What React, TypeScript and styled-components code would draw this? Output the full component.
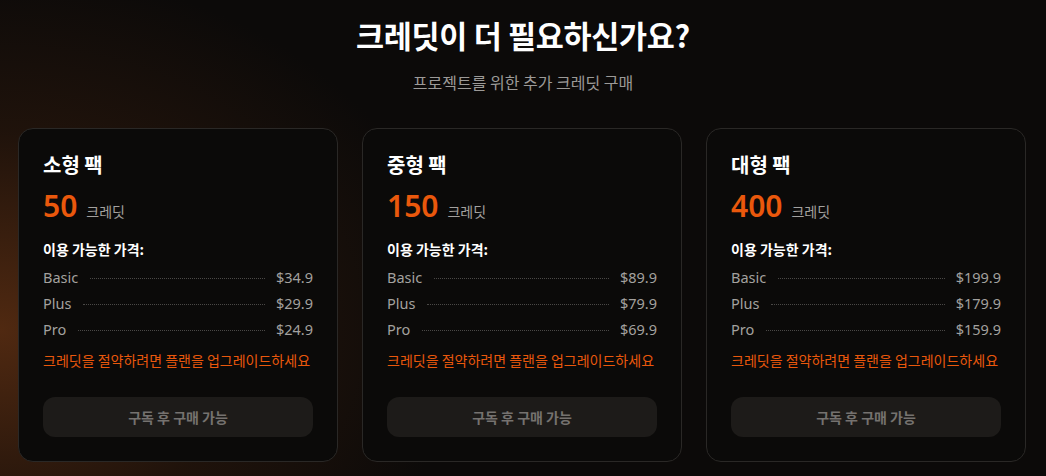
import styled, { createGlobalStyle } from "styled-components";

const GlobalStyle = createGlobalStyle`
  html, body {
    margin: 0;
    padding: 0;
    background: #0c0a09;
  }
  body {
    font-family: "Noto Sans", "Noto Sans CJK KR", sans-serif;
  }
`;

const packs = [
  { name: "소형 팩", credits: 50, prices: ["$34.9", "$29.9", "$24.9"] },
  { name: "중형 팩", credits: 150, prices: ["$89.9", "$79.9", "$69.9"] },
  { name: "대형 팩", credits: 400, prices: ["$199.9", "$179.9", "$159.9"] },
];

const tiers = ["Basic", "Plus", "Pro"];

export default function App() {
  return (
    <Page>
      <GlobalStyle />
      <Header>
        <Title>크레딧이 더 필요하신가요?</Title>
        <Subtitle>프로젝트를 위한 추가 크레딧 구매</Subtitle>
      </Header>
      <Grid>
        {packs.map((p) => (
          <Card key={p.name}>
            <CardTitle>{p.name}</CardTitle>
            <CreditLine>
              <Amount>{p.credits}</Amount>
              <Unit>크레딧</Unit>
            </CreditLine>
            <PriceLabel>이용 가능한 가격:</PriceLabel>
            <PriceList>
              {tiers.map((t, i) => (
                <PriceRow key={t}>
                  <span>{t}</span>
                  <Leader />
                  <span>{p.prices[i]}</span>
                </PriceRow>
              ))}
            </PriceList>
            <Hint>크레딧을 절약하려면 플랜을 업그레이드하세요</Hint>
            <DisabledBtn disabled>구독 후 구매 가능</DisabledBtn>
          </Card>
        ))}
      </Grid>
    </Page>
  );
}

const Page = styled.div`
  min-height: 476px;
  box-sizing: border-box;
  padding: 13px 18px 0;
  background:
    radial-gradient(ellipse 460px 360px at 0px 330px, rgba(80, 41, 17, 1), rgba(44, 24, 12, 0.6) 55%, rgba(12, 10, 9, 0) 100%),
    #0c0a09;
  overflow: hidden;
`;

const Header = styled.div`
  display: flex;
  flex-direction: column;
  align-items: center;
`;

const Title = styled.h1`
  margin: 0;
  font-family: "Noto Sans CJK KR", "Noto Sans", sans-serif;
  font-size: 30.5px;
  font-weight: 700;
  line-height: 44px;
  color: #ffffff;
  letter-spacing: -0.3px;
`;

const Subtitle = styled.p`
  margin: 14px 0 0;
  font-family: "Noto Sans CJK KR", sans-serif;
  font-size: 16px;
  line-height: 22px;
  color: #9c9a98;
`;

const Grid = styled.div`
  margin-top: 35px;
  display: grid;
  grid-template-columns: repeat(3, 320px);
  gap: 24px;
`;

const Card = styled.div`
  box-sizing: border-box;
  height: 334px;
  border: 1px solid #2a2826;
  border-radius: 15px;
  background: #0b0a09;
  padding: 20px 24px 24px;
  display: flex;
  flex-direction: column;
`;

const CardTitle = styled.h3`
  margin: 0;
  font-family: "Noto Sans CJK KR", sans-serif;
  font-size: 20px;
  font-weight: 700;
  line-height: 32px;
  color: #ffffff;
`;

const CreditLine = styled.div`
  display: flex;
  align-items: baseline;
  gap: 9px;
  margin-top: 5px;
`;

const Amount = styled.span`
  font-size: 30px;
  font-weight: 600;
  line-height: 40px;
  color: #ea580c;
`;

const Unit = styled.span`
  font-family: "Noto Sans CJK KR", sans-serif;
  font-size: 14px;
  color: #a3a19f;
`;

const PriceLabel = styled.div`
  margin-top: 13px;
  font-family: "Noto Sans CJK KR", sans-serif;
  font-size: 14px;
  font-weight: 700;
  line-height: 20px;
  color: #ffffff;
`;

const PriceList = styled.div`
  margin-top: 5px;
  display: flex;
  flex-direction: column;
`;

const PriceRow = styled.div`
  display: flex;
  align-items: center;
  height: 26px;
  font-size: 14.5px;
  color: #a3a19f;
`;

const Leader = styled.span`
  flex: 1;
  margin: 2px 11px 0 12px;
  border-bottom: 1px dotted #4a4846;
`;

const Hint = styled.p`
  margin: 7px 0 0;
  font-family: "Noto Sans CJK KR", sans-serif;
  font-size: 14px;
  line-height: 22px;
  color: #ea580c;
`;

const DisabledBtn = styled.button`
  margin-top: auto;
  height: 40px;
  width: 100%;
  border: none;
  border-radius: 12px;
  background: #1d1b19;
  color: #75726f;
  font-family: "Noto Sans CJK KR", sans-serif;
  font-size: 14px;
  font-weight: 700;
  cursor: not-allowed;
`;
